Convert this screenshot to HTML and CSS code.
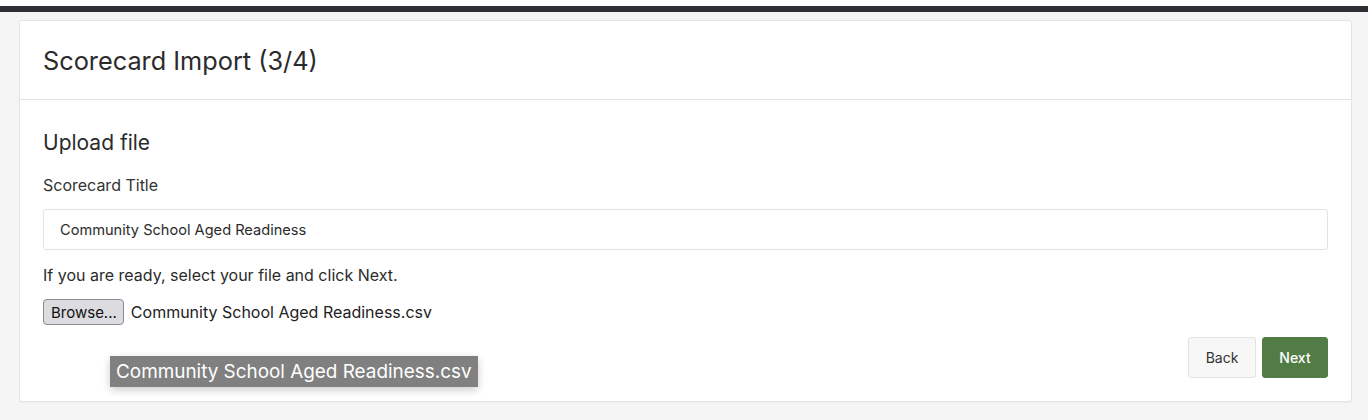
FILE: index.html
```html
<!DOCTYPE html>
<html lang="en">
<head>
<meta charset="utf-8">
<title>Scorecard Import</title>
<link rel="stylesheet" href="styles.css">
</head>
<body>
<div class="topstrip"></div>
<div class="topbar"></div>
<main class="page">
  <section class="card">
    <header class="card-header">
      <h1 class="card-title">Scorecard Import (3/4)</h1>
    </header>
    <div class="card-body">
      <h2 class="section-title">Upload file</h2>
      <label class="field-label" for="title">Scorecard Title</label>
      <div class="text-input" id="title">Community School Aged Readiness</div>
      <p class="hint">If you are ready, select your file and click Next.</p>
      <div class="file-row">
        <span class="browse-btn">Browse...</span>
        <span class="file-name">Community School Aged Readiness.csv</span>
        <span class="tooltip">Community School Aged Readiness.csv</span>
      </div>
      <div class="actions">
        <button class="btn btn-back">Back</button>
        <button class="btn btn-next">Next</button>
      </div>
    </div>
  </section>
</main>
</body>
</html>
```
FILE: styles.css
```css
* { box-sizing: border-box; }
html, body { margin: 0; padding: 0; }
body {
  background: #f5f5f5;
  font-family: Inter, "Liberation Sans", Arial, sans-serif;
  color: #333;
  height: 420px;
  overflow: hidden;
}
.topstrip { height: 6px; background: #ffffff; }
.topbar { height: 6px; background: #2e2f35; }
.page { padding: 8px 16px 0 19px; }
.card {
  background: #fff;
  border: 1px solid #e4e4e4;
  border-radius: 3px;
  height: 382px;
  box-shadow: 0 1px 2px rgba(0,0,0,0.04);
}
.card-header {
  height: 79px;
  border-bottom: 1px solid #e2e2e2;
  display: flex;
  align-items: center;
  padding: 0 23px 0 23px;
}
.card-title {
  margin: 0;
  font-size: 25.3px;
  font-weight: 400;
  color: #2b2b2b;
}
.card-body { padding: 30px 23px 0 23px; position: relative; }
.section-title {
  margin: 0;
  font-size: 21px;
  font-weight: 400;
  color: #2b2b2b;
  line-height: 26px;
}
.field-label {
  display: block;
  margin-top: 20px;
  font-size: 16px;
  color: #333;
  line-height: 18px;
}
.text-input {
  margin-top: 15px;
  height: 41px;
  border: 1px solid #e3e3e3;
  border-radius: 3px;
  padding: 0 16px;
  display: flex;
  align-items: center;
  font-size: 14.6px;
  color: #2b2b2b;
}
.hint {
  margin: 16px 0 0 0;
  font-size: 16px;
  line-height: 18px;
  color: #2b2b2b;
}
.file-row {
  margin-top: 14px;
  display: flex;
  align-items: center;
  gap: 7px;
  position: relative;
  height: 28px;
}
.browse-btn {
  display: inline-flex;
  align-items: center;
  height: 26px;
  padding: 0 6px 0 7px;
  background: #dcdce0;
  border: 1px solid #8d8d92;
  border-radius: 4px;
  font-size: 15px;
  color: #111;
}
.file-name { font-size: 16px; color: #222; }
.tooltip {
  position: absolute;
  left: 67px;
  top: 58px;
  background: #808080;
  color: #fff;
  font-size: 18.9px;
  padding: 0 6px;
  height: 31px;
  display: flex;
  align-items: center;
  box-shadow: 0 3px 8px rgba(0,0,0,0.2);
  white-space: nowrap;
  z-index: 2;
}
.actions {
  display: flex;
  justify-content: flex-end;
  gap: 6px;
  margin-top: 11px;
}
.btn {
  height: 41px;
  border-radius: 3px;
  font-family: Inter, "Liberation Sans", Arial, sans-serif;
  font-size: 14px;
  padding: 0 17px;
  cursor: pointer;
}
.btn-back {
  background: #f7f7f7;
  border: 1px solid #e3e3e3;
  color: #333;
  width: 68px;
  padding: 0;
}
.btn-next {
  background: #527c45;
  border: 1px solid #527c45;
  color: #fff;
  width: 66px;
  padding: 0;
  font-weight: 500;
}
```
